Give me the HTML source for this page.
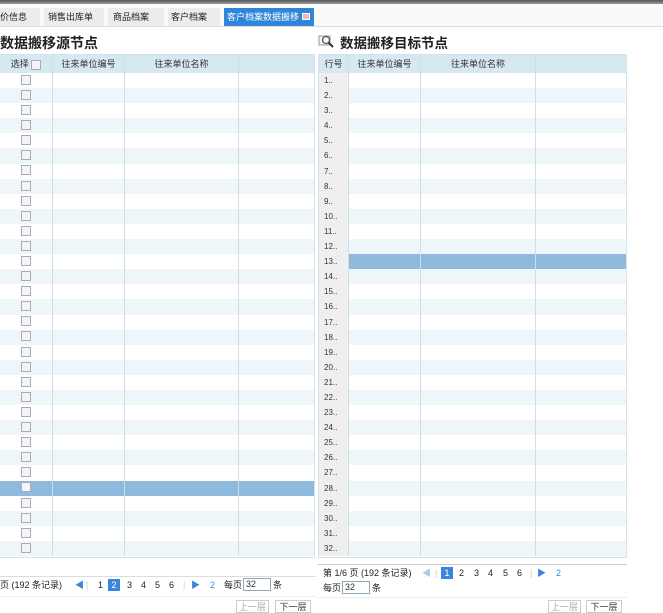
<!DOCTYPE html>
<html><head><meta charset="utf-8"><style>
*{box-sizing:border-box;margin:0;padding:0}
body{width:663px;height:613px;overflow:hidden;background:#fff;font-family:"Liberation Sans","Noto Sans CJK SC",sans-serif;font-size:9px;color:#333;position:relative}
.abs{position:absolute}
.top{left:0;top:0;width:663px;height:4px;background:linear-gradient(#555,#999)}
.tabbar{left:0;top:4px;width:663px;height:23px;background:#fafafa;border-bottom:1px solid #ddd}
.tab{position:absolute;top:4px;height:18px;background:#ececec;line-height:18px;font-size:9px;color:#222;padding-left:0}
.tab.act{background:#2f86d8;color:#fff}
.title{font-size:13.5px;font-weight:bold;color:#222}
.grid{border:1px solid #d4e2ea}
.hdr{height:18px;background:#d6e8f1;display:flex}
.hdr div,.row div{border-right:1px solid #d0dde5;text-align:center;line-height:18px;color:#333}
.row{height:15.1px;display:flex}
.row div{line-height:15px;font-size:8px}
.row:nth-child(even){background:#eef6fa}
.row:nth-child(odd){background:#fff}
.row.sel{background:#8fb9dd!important}
.cb{display:inline-block;width:10px;height:10px;border:1px solid #aab;background:#f4f4f4;vertical-align:middle}
.num{background:#efefef;text-align:left!important;padding-left:5px;color:#444}
.pg{position:absolute;font-size:9px;color:#222;white-space:nowrap;line-height:12px}
.bx{position:absolute;width:12px;height:12px;background:#3a86df;color:#fff;text-align:center;line-height:12px;font-size:9px}
.inp{position:absolute;width:28px;height:13px;border:1px solid #8ab;line-height:11px;padding-left:2px;font-size:9px}
.btn{position:absolute;top:600px;height:13px;border:1px solid #ccc;font-size:9px;text-align:center;line-height:12px;background:#fff}
</style></head><body>
<div class="abs top"></div>
<div class="abs tabbar">
<div class="tab" style="left:0;width:40px">价信息</div>
<div class="tab" style="left:44px;width:60px;padding-left:4px">销售出库单</div>
<div class="tab" style="left:108px;width:56px;padding-left:5px">商品档案</div>
<div class="tab" style="left:168px;width:52px;padding-left:3px">客户档案</div>
<div class="tab act" style="left:224px;width:90px;padding-left:3px">客户档案数据搬移 <span style="display:inline-block;width:8px;height:7px;background:#f5b7b7;border:1px solid #fff"></span></div>
</div>
<div class="abs title" style="left:0;top:33px;font-size:14px">数据搬移源节点</div>
<svg class="abs" style="left:318px;top:34px" width="18" height="14" viewBox="0 0 18 14"><rect x="1" y="2" width="11" height="9" fill="#f4f4f4" stroke="#999"/><circle cx="8" cy="6" r="3.5" fill="#fff" stroke="#555" stroke-width="1.3"/><path d="M10.5 8.5 L15 13" stroke="#333" stroke-width="2"/></svg>
<div class="abs title" style="left:340px;top:32px">数据搬移目标节点</div>

<div class="abs grid" style="left:-1px;top:54px;width:316px;height:504px">
<div class="hdr"><div style="width:53px">选择 <span class="cb"></span></div><div style="width:72px">往来单位编号</div><div style="width:114px">往来单位名称</div><div style="flex:1;border:0"></div></div>
<div id="L"></div>
</div>
<div class="abs grid" style="left:318px;top:54px;width:309px;height:504px">
<div class="hdr"><div style="width:30px">行号</div><div style="width:72px">往来单位编号</div><div style="width:115px">往来单位名称</div><div style="flex:1;border:0"></div></div>
<div id="R"></div>
</div>

<div class="abs" style="left:0;top:576px;width:316px;height:21px;border-top:1px solid #ddd;border-bottom:1px solid #eee"></div>
<div class="pg" style="left:0;top:579px">页 (192 条记录)</div>
<div class="pg" style="left:75px;top:579px;color:#3a86df">◀</div>
<div class="pg" style="left:86px;top:579px;color:#ccc">|</div>
<div class="pg" style="left:98px;top:579px">1</div>
<div class="bx" style="left:108px;top:579px">2</div>
<div class="pg" style="left:127px;top:579px">3</div>
<div class="pg" style="left:141px;top:579px">4</div>
<div class="pg" style="left:155px;top:579px">5</div>
<div class="pg" style="left:169px;top:579px">6</div>
<div class="pg" style="left:183px;top:579px;color:#ccc">|</div>
<div class="pg" style="left:191px;top:579px;color:#3a86df">▶</div>
<div class="pg" style="left:210px;top:579px;color:#3a86df">2</div>
<div class="pg" style="left:224px;top:579px">每页</div>
<div class="inp" style="left:243px;top:578px">32</div>
<div class="pg" style="left:273px;top:579px">条</div>

<div class="abs" style="left:318px;top:564px;width:309px;height:34px;border-top:1px solid #ccc;border-bottom:1px solid #eee"></div>
<div class="pg" style="left:323px;top:567px">第 1/6 页 (192 条记录)</div>
<div class="pg" style="left:422px;top:567px;color:#aac8ee">◀</div>
<div class="pg" style="left:435px;top:567px;color:#ccc">|</div>
<div class="bx" style="left:441px;top:567px">1</div>
<div class="pg" style="left:459px;top:567px">2</div>
<div class="pg" style="left:474px;top:567px">3</div>
<div class="pg" style="left:488px;top:567px">4</div>
<div class="pg" style="left:503px;top:567px">5</div>
<div class="pg" style="left:517px;top:567px">6</div>
<div class="pg" style="left:530px;top:567px;color:#ccc">|</div>
<div class="pg" style="left:537px;top:567px;color:#3a86df">▶</div>
<div class="pg" style="left:556px;top:567px;color:#3a86df">2</div>
<div class="pg" style="left:323px;top:582px">每页</div>
<div class="inp" style="left:342px;top:581px">32</div>
<div class="pg" style="left:372px;top:582px">条</div>

<div class="btn" style="left:236px;width:33px;color:#aaa">上一层</div>
<div class="btn" style="left:275px;width:36px">下一层</div>
<div class="btn" style="left:548px;width:33px;color:#aaa">上一层</div>
<div class="btn" style="left:586px;width:36px">下一层</div>
<script>
var l='',r='';
for(var i=1;i<=32;i++){
l+='<div class="row'+(i==28?' sel':'')+'"><div style="width:53px;line-height:14px"><span class="cb"></span></div><div style="width:72px"></div><div style="width:114px"></div><div style="flex:1;border:0"></div></div>';
r+='<div class="row'+(i==13?' sel':'')+'"><div class="num" style="width:30px">'+i+'..</div><div style="width:72px"></div><div style="width:115px"></div><div style="flex:1;border:0"></div></div>';
}
document.getElementById('L').innerHTML=l;document.getElementById('R').innerHTML=r;
</script>
</body></html>
